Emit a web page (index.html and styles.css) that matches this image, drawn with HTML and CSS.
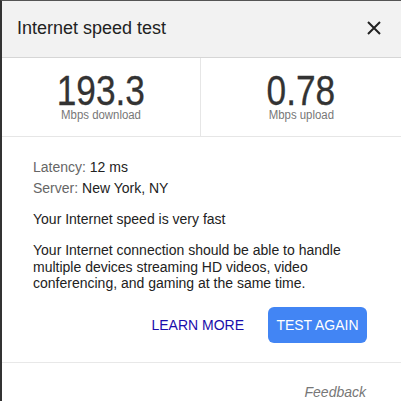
FILE: index.html
```html
<!DOCTYPE html>
<html>
<head>
<meta charset="utf-8">
<link rel="stylesheet" href="styles.css">
</head>
<body>
<div class="dialog">
  <div class="header">
    <span class="title">Internet speed test</span>
    <svg class="close" width="14" height="14" viewBox="0 0 14 14"><path d="M1 1L13 13M13 1L1 13" stroke="#222" stroke-width="2" fill="none"/></svg>
  </div>
  <div class="stats">
    <div class="stat">
      <div class="num">193.3</div>
      <div class="unit">Mbps download</div>
    </div>
    <div class="stat">
      <div class="num">0.78</div>
      <div class="unit">Mbps upload</div>
    </div>
  </div>
  <div class="body">
    <div class="meta"><span class="label">Latency:</span> 12 ms</div>
    <div class="meta"><span class="label">Server:</span> New York, NY</div>
    <p class="verdict">Your Internet speed is very fast</p>
    <p class="desc">Your Internet connection should be able to handle multiple devices streaming HD videos, video conferencing, and gaming at the same time.</p>
    <div class="actions">
      <span class="learn">LEARN MORE</span>
      <span class="again">TEST AGAIN</span>
    </div>
  </div>
  <div class="footer">
    <span class="feedback">Feedback</span>
  </div>
</div>
</body>
</html>
```
FILE: styles.css
```css
html, body {
  margin: 0;
  padding: 0;
  background: #fff;
}
body {
  font-family: "Liberation Sans", Arial, sans-serif;
  color: #222;
  width: 401px;
  height: 401px;
  overflow: hidden;
}
.dialog {
  border-left: 2px solid #333;
  border-top: 1px solid #555;
  height: 400px;
}
.header {
  height: 56px;
  background: #f2f2f2;
  border-bottom: 1px solid #d6d6d6;
  display: flex;
  align-items: center;
  justify-content: space-between;
  padding: 0 20px 0 15px;
}
.title {
  font-size: 18px;
  color: #222;
  margin-top: -1px;
}
.close {
  display: block;
  margin-top: -2px;
}
.stats {
  display: grid;
  grid-template-columns: 199px 1fr;
  height: 78px;
  border-bottom: 1px solid #e6e6e6;
}
.stat {
  display: flex;
  flex-direction: column;
  align-items: center;
  padding-top: 15px;
}
.stat:first-child {
  border-right: 1px solid #e6e6e6;
}
.num {
  font-size: 43px;
  line-height: 34px;
  color: #333;
  transform: scaleX(0.82);
  -webkit-text-stroke: 0.3px #333;
}
.unit {
  font-size: 12px;
  color: #777;
  line-height: 13px;
  margin-top: 2px;
  transform: scaleX(0.95);
}
.body {
  padding: 20px 34px 0 31px;
  font-size: 14px;
}
.meta {
  line-height: 20px;
  margin-bottom: 1px;
}
.label {
  color: #666;
}
.verdict {
  margin: 11px 0 0;
  line-height: 20px;
}
.desc {
  margin: 13px 0 0;
  line-height: 16.5px;
}
.actions {
  display: flex;
  justify-content: flex-end;
  align-items: center;
  margin-top: 15px;
  height: 36px;
}
.learn {
  color: #1a0dab;
  font-size: 14px;
  margin-right: 24px;
}
.again {
  background: #4285f4;
  color: #fff;
  font-size: 14px;
  border-radius: 6px;
  height: 36px;
  width: 99px;
  display: flex;
  align-items: center;
  justify-content: center;
}
.footer {
  margin-top: 19px;
  border-top: 1px solid #e8e8e8;
  display: flex;
  justify-content: flex-end;
  padding: 19px 35px 0 0;
}
.feedback {
  font-style: italic;
  color: #777;
  font-size: 14px;
  line-height: 20px;
}
```
